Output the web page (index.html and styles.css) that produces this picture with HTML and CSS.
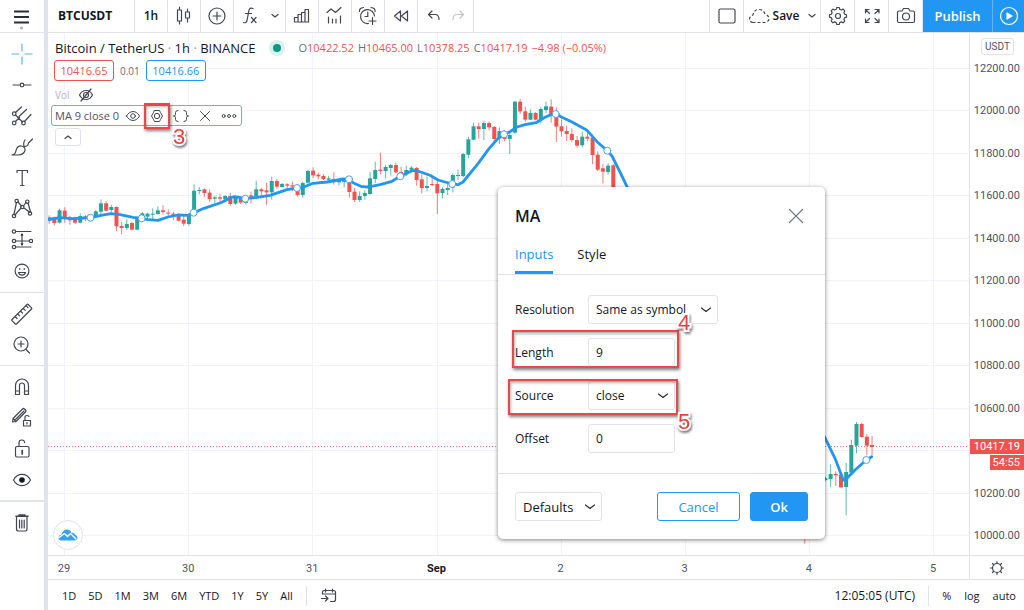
FILE: index.html
```html
<!DOCTYPE html>
<html lang="en">
<head>
<meta charset="utf-8">
<title>BTCUSDT chart</title>
<meta name="viewport" content="width=device-width, initial-scale=1">
<link rel="stylesheet" href="styles.css">
</head>
<body>
<div class="app">
  <aside class="sidebar" aria-label="Drawing tools">
    <button class="menu" aria-label="Menu"><svg width="18" height="22" viewBox="0 0 18 22"><path d="M1 2.500h15M1 8h15M1 13.500h15" stroke-width="2"/><circle cx="8.500" cy="19" r="1.600" class="dot"/></svg></button>
    <div class="tools">
      <button aria-label="Cross"><svg class="blue" width="22" height="22" viewBox="0 0 22 22"><path d="M11 1v7M11 14v7M1 11h7M14 11h7"/></svg></button>
      <button aria-label="Trend line"><svg width="22" height="22" viewBox="0 0 22 22"><path d="M2 11h7M13 11h7"/><circle cx="11" cy="11" r="1.800"/></svg></button>
      <button aria-label="Pitchfork"><svg width="22" height="22" viewBox="0 0 22 22"><path d="M4.500 7.500L10.500 2M4.500 10l7 7M8 11.500L15.500 4.500M4.500 16.500l4-4M13.500 16.500L20 9.500"/><circle cx="3.200" cy="8.700" r="1.800"/><circle cx="3.200" cy="18" r="1.800"/><circle cx="12.500" cy="18" r="1.800"/></svg></button>
      <button aria-label="Brush"><svg width="22" height="22" viewBox="0 0 22 22"><path d="M1 19q3.500-.5 4-4.500Q6.500 9.500 10.500 10q4 1 3.500 4.500Q12.500 19 7 19zM13 10q-1-3.500 1-6M13.500 10.500q3.500 0 4-3.500L21.500 3"/></svg></button>
      <button aria-label="Text"><svg width="22" height="22" viewBox="0 0 22 22"><path d="M6 5.500V3.500h10.500v2M11.200 3.500v15M9.500 18.500h3.500"/></svg></button>
      <button aria-label="Pattern"><svg width="22" height="22" viewBox="0 0 22 22"><path d="M5.500 4.500L3 16M7 4l3.500 4M12.500 8l2.500-3.500M4 17l6-7M13 10l6 4.500M17 5l2.500 9"/><circle cx="5.700" cy="3" r="1.700"/><circle cx="16.300" cy="3.700" r="1.700"/><circle cx="11.300" cy="9" r="1.700"/><circle cx="3" cy="18" r="1.700"/><circle cx="19" cy="15.500" r="1.700"/></svg></button>
      <button aria-label="Prediction"><svg width="22" height="22" viewBox="0 0 22 22"><path d="M5 2.500h15M5 12h13M5 18h15M11 5v11"/><path class="solid fine" d="M11 4.500l1.500 2h-3zM11 16.500l-1.500-2h3z"/><circle cx="3" cy="2.500" r="1.700"/><circle cx="3" cy="12" r="1.700"/><circle cx="3" cy="18" r="1.700"/><circle cx="20" cy="12" r="1.700"/></svg></button>
      <button aria-label="Icons"><svg width="22" height="22" viewBox="0 0 22 22"><circle cx="11" cy="11" r="6.900"/><path d="M7.500 12.500c1 3.500 6 3.500 7 0z"/><circle class="solid fine" cx="8.700" cy="9" r=".8"/><circle class="solid fine" cx="13.300" cy="9" r=".8"/></svg></button>
    </div>
    <div class="tools">
      <button aria-label="Measure"><svg width="22" height="22" viewBox="0 0 22 22"><path d="M1 16.500L16 1.500q.6-.6 1.200 0l3.300 3.300q.6.600 0 1.200L5.500 21q-.6.600-1.200 0L1 17.700q-.6-.6 0-1.200zM4 13.500l2 2M6.700 10.800l2 2M9.500 8l2 2M12.200 5.300l2 2M15 2.700l2 2"/></svg></button>
      <button aria-label="Zoom in"><svg width="22" height="22" viewBox="0 0 22 22"><circle cx="10" cy="10" r="7"/><path d="M10 7v6M7 10h6M15 15.500l3.500 3.500"/></svg></button>
    </div>
    <div class="tools">
      <button aria-label="Magnet"><svg width="22" height="22" viewBox="0 0 22 22"><path d="M4.500 18.500V9.500a6.500 6.500 0 0 1 13 0v9h-4V9.500a2.500 2.500 0 0 0-5 0v9zM4.500 15h4M13.500 15h4"/></svg></button>
      <button aria-label="Stay in drawing mode"><svg width="22" height="22" viewBox="0 0 22 22"><path d="M2 11.500L11.500 2q1-1 2 0l1 1q1 1 0 2L5 14.500l-3.500.5zM4 13l9-9M2 11.500l3 3M12.500 13.500h7v5.500h-7zM14 13.500v-3q0-2 2-2t2 1M16 15.500v1.500"/></svg></button>
      <button aria-label="Lock drawings"><svg width="22" height="22" viewBox="0 0 22 22"><path d="M8 8.500V5q0-3 2.800-3t2.700 2.500"/><rect x="4.500" y="8.500" width="13.500" height="10.500" rx="1.500"/><path d="M11.200 12.500v3.500" stroke-width="1.700"/></svg></button>
      <button aria-label="Hide drawings"><svg width="22" height="22" viewBox="0 0 22 22"><path d="M2.500 11c4-7.500 13-7.500 17 0-4 7.500-13 7.500-17 0z"/><circle class="solid" cx="11" cy="11" r="2.200"/></svg></button>
    </div>
    <div class="tools">
      <button aria-label="Remove"><svg width="22" height="22" viewBox="0 0 22 22"><path d="M5.500 4.500v12.500q0 2 2 2h7q1.500 0 1.500-2V4.500M8.500 8v8M10.800 8v8M13.200 8v8"/><path d="M5 4.300h12M8 3h6" stroke-width="1.600"/></svg></button>
    </div>
  </aside>

  <main class="main">
    <header class="topbar">
      <button class="symbol">BTCUSDT</button>
      <button class="cell interval">1h</button>
      <button class="cell" aria-label="Candles"><svg width="22" height="22" viewBox="0 0 22 22"><path d="M6.500 2v3M6.500 16v3M4.500 5h4v11h-4zM14.500 4v3M14.500 13v4M12.500 7h4v6h-4z"/></svg></button>
      <button class="cell" aria-label="Compare"><svg width="22" height="22" viewBox="0 0 22 22"><circle cx="11" cy="11" r="8"/><path d="M11 7v8M7 11h8"/></svg></button>
      <button class="cell wide" aria-label="Indicators"><svg width="22" height="22" viewBox="0 0 22 22"><path d="M13 3.500q-3.500-1.500-4.200 2.500L7 15.500q-.7 3-3.500 2M5.500 8.500h6M11.500 12.500l4.500 5M16 12.500l-4.500 5"/></svg><svg class="caret" width="8" height="6" viewBox="0 0 8 6"><path d="M1 1.500l3 2.500 3-2.500"/></svg></button>
      <button class="cell" aria-label="Financials"><svg width="22" height="22" viewBox="0 0 22 22"><path d="M3.500 12.500H7V17H3.500zM7 9.500h3.500V17H7zM13.500 7.500h-3V17H14V7.500zM14 4.500h3.500V17H14z"/></svg></button>
      <button class="cell" aria-label="Templates"><svg width="22" height="22" viewBox="0 0 22 22"><path d="M3 7.500l4-3.500 4.500 3.500 5.500-5M4.500 12v6M8.500 14v4M12 14v4M16.500 11v7"/></svg></button>
      <button class="cell" aria-label="Alert"><svg width="22" height="22" viewBox="0 0 22 22"><path d="M17.500 11a7 7 0 1 0-6 7.500M2.500 6.500q-.5-3.500 4-4M14 2.500q4.500.5 4 4M10.800 7v4.500H8M15.500 12.500v7M12 16h7"/></svg></button>
      <button class="cell" aria-label="Replay"><svg width="22" height="22" viewBox="0 0 22 22"><path d="M10.500 6v10l-6-5zM17.500 6v10l-6-5z"/></svg></button>
      <div class="cell history"><button aria-label="Undo"><svg width="18" height="22" viewBox="0 0 18 22"><path d="M7 6L3.500 9.500 7 13M3.500 9.500H10q4 0 4 5"/></svg></button><button class="faded" aria-label="Redo"><svg width="18" height="22" viewBox="0 0 18 22"><path d="M11 6l3.500 3.500L11 13M14.500 9.500H8q-4 0-4 5"/></svg></button></div>
      <div class="fill"></div>
      <div class="actions">
        <button class="cell" aria-label="Layout"><svg width="22" height="22" viewBox="0 0 22 22"><rect x="3" y="4" width="16" height="14" rx="1.500"/></svg></button>
        <button class="cell save"><svg class="dashed" width="22" height="22" viewBox="0 0 22 22"><path d="M5 17.500q-3.500-.5-3.500-3.500T5 10q1-5.500 6-5.500t6 5q4 1 4 4t-3.500 4z"/></svg><span>Save</span><svg class="caret" width="8" height="6" viewBox="0 0 8 6"><path d="M1 1.500l3 2.500 3-2.500"/></svg></button>
        <button class="cell" aria-label="Settings"><svg width="22" height="22" viewBox="0 0 22 22"><path d="M9.300 4.300L9.800 2.500h2.400l.5 1.800 1.700.7 1.700-.9 1.700 1.700-.9 1.700.7 1.700 1.900.6v2.400l-1.900.5-.7 1.700.9 1.700-1.700 1.700-1.700-.9-1.700.7-.5 1.900H9.800l-.5-1.900-1.700-.7-1.700.9-1.700-1.700.9-1.700-.7-1.700-1.900-.5V9.800l1.900-.6.7-1.700-.9-1.700 1.700-1.700 1.700.9z"/><circle cx="11" cy="11" r="2.500"/></svg></button>
        <button class="cell" aria-label="Fullscreen"><svg width="22" height="22" viewBox="0 0 22 22"><path d="M4.500 8V4.500H8M4.500 4.500l4 4M14 4.500h4V8M18 4.500l-4 4M4.500 14v3.500H8M4.500 17.500l4-4M14 17.500h4V14M18 17.500l-4-4"/></svg></button>
        <button class="cell" aria-label="Snapshot"><svg width="22" height="22" viewBox="0 0 22 22"><path d="M4 6h3l1.500-2.500h5L15 6h3q1.500 0 1.500 1.500v8.500q0 1.500-1.500 1.500H4q-1.500 0-1.500-1.500V7.500Q2.500 6 4 6z"/><circle cx="11" cy="11.500" r="3.500"/></svg></button>
      </div>
      <button class="publish">Publish</button>
      <button class="play" aria-label="Play"><svg width="22" height="22" viewBox="0 0 22 22"><circle cx="11" cy="11" r="8.500"/><path class="solid" d="M9 8l5 3-5 3z"/></svg></button>
    </header>

    <section class="chart">
      <div class="plot">
        <svg id="canvas" class="canvas" viewBox="48 33 921 522" preserveAspectRatio="xMinYMin slice" aria-label="Price chart"></svg>

        <div class="legend">
          <div class="title"><h1>Bitcoin / TetherUS <i>·</i> 1h <i>·</i> BINANCE</h1><span class="live"></span>
            <p class="ohlc"><span>O<b>10422.52</b></span><span>H<b>10465.00</b></span><span>L<b>10378.25</b></span><span>C<b>10417.19</b></span><b>−4.98 (−0.05%)</b></p></div>
          <div class="quotes"><button class="sell">10416.65</button><span>0.01</span><button class="buy">10416.66</button></div>
          <div class="volume"><span>Vol</span><svg width="16" height="14" viewBox="0 0 16 14"><path d="M1.500 7c3-6 10-6 13 0-3 6-10 6-13 0zM13 1L3 13"/><circle cx="8" cy="7" r="2.500"/></svg></div>
          <div class="study">
            <span class="name">MA 9 close 0</span>
            <button aria-label="Hide"><svg width="16" height="16" viewBox="0 0 16 16"><path d="M1.500 8c3-6 10-6 13 0-3 6-10 6-13 0z"/><circle cx="8" cy="8" r="2.300"/></svg></button>
            <button aria-label="Settings"><svg width="16" height="16" viewBox="0 0 16 16"><path d="M5.500 2.500h5l1 2 2 3.500-2 3.500-1 2h-5l-1-2-2-3.500 2-3.500z"/><circle cx="8" cy="8" r="2.700"/></svg><span class="mark mark-settings"></span><span class="step step-three">3</span></button>
            <button aria-label="Source code"><svg width="18" height="16" viewBox="0 0 18 16"><path d="M6 2.500q-2.500 0-2.500 2V6.500Q3.500 8 1.500 8q2 0 2 1.500v2q0 2 2.500 2M12 2.500q2.500 0 2.500 2V6.500q0 1.500 2 1.500-2 0-2 1.500v2q0 2-2.500 2"/></svg></button>
            <button aria-label="Remove"><svg width="16" height="16" viewBox="0 0 16 16"><path d="M3.500 3.500l9 9M12.500 3.500l-9 9"/></svg></button>
            <button aria-label="More"><svg width="16" height="16" viewBox="0 0 16 16"><circle cx="2.700" cy="8" r="1.500"/><circle cx="8" cy="8" r="1.500"/><circle cx="13.300" cy="8" r="1.500"/></svg></button>
          </div>
          <button class="collapse" aria-label="Collapse"><svg width="8" height="6" viewBox="0 0 8 6"><path d="M1 4.500L4 2l3 2.500"/></svg></button>
        </div>

        <a class="brand" href="#" aria-label="Chart provider"><svg width="20" height="14" viewBox="0 0 20 14"><path class="cloud" d="M3 12.500Q0 12 .5 9 1 6.500 3.500 6.500 5 1.500 9 1.500q3.500 0 4.500 3.500 2-1 3.500 1.500 2.500 1 2.500 3.500 0 2.500-3 2.500z"/><path class="trace" d="M1 9.500l5.500-4 3 3 3-3 5.500 5.500"/></svg></a>

        <form class="dialog" aria-label="MA settings">
          <div class="head"><h2>MA</h2><button type="button" aria-label="Close"><svg width="16" height="16" viewBox="0 0 16 16"><path d="M1.500 1.500l13 13M14.500 1.500l-13 13"/></svg></button></div>
          <div class="tabs"><button type="button" class="active">Inputs</button><button type="button">Style</button></div>
          <div class="fields">
            <div class="row"><label for="resolution">Resolution</label><div class="pick long"><select id="resolution"><option>Same as symbol</option></select><svg width="12" height="8" viewBox="0 0 12 8"><path d="M1.500 2L6 5.500 10.500 2"/></svg></div></div>
            <div class="row"><label for="length">Length</label><input id="length" type="text" value="9"><span class="mark mark-length"></span><span class="step step-four">4</span></div>
            <div class="row"><label for="source">Source</label><div class="pick"><select id="source"><option>close</option></select><svg width="12" height="8" viewBox="0 0 12 8"><path d="M1.500 2L6 5.500 10.500 2"/></svg></div><span class="mark mark-source"></span><span class="step step-five">5</span></div>
            <div class="row"><label for="offset">Offset</label><input id="offset" type="text" value="0"></div>
          </div>
          <div class="foot"><button type="button" class="defaults">Defaults<svg width="12" height="8" viewBox="0 0 12 8"><path d="M1.500 2L6 5.500 10.500 2"/></svg></button><div class="fill"></div><button type="button" class="cancel">Cancel</button><button type="button" class="ok">Ok</button></div>
        </form>
      </div>

      <div class="prices">
        <button class="currency">USDT</button>
        <span>12200.00</span><span>12000.00</span><span>11800.00</span><span>11600.00</span><span>11400.00</span><span>11200.00</span><span>11000.00</span><span>10800.00</span><span>10600.00</span><span class="covered">10400.00</span><span>10200.00</span><span>10000.00</span>
        <div class="last"><b>10417.19</b><b class="timer">54:55</b></div>
      </div>

      <div class="days"><span>29</span><span>30</span><span>31</span><span class="month">Sep</span><span>2</span><span>3</span><span>4</span><span>5</span></div>
      <button class="corner" aria-label="Scale settings"><svg width="16" height="16" viewBox="0 0 16 16"><circle cx="8" cy="8" r="4.500"/><path d="M8 1.500v2M8 12.500v2M1.500 8h2M12.500 8h2M3.500 3.500l1.300 1.300M11.200 11.200l1.300 1.300M12.500 3.500l-1.300 1.300M4.800 11.200l-1.300 1.300"/></svg></button>
    </section>

    <footer class="bottombar">
      <div class="ranges"><button>1D</button><button>5D</button><button>1M</button><button>3M</button><button>6M</button><button>YTD</button><button>1Y</button><button>5Y</button><button>All</button></div>
      <span class="rule"></span>
      <button aria-label="Go to date"><svg width="18" height="16" viewBox="0 0 18 16"><path d="M2.500 6V4.500q0-2 2-2h9q2 0 2 2v7q0 2-2 2h-3M2.500 6h13M5.500 1v3M12.500 1v3M1.500 10.500h6M5.500 8l2.500 2.500L5.500 13"/></svg></button>
      <div class="fill"></div>
      <button class="clock">12:05:05 (UTC)</button>
      <span class="rule"></span>
      <div class="scale"><button>%</button><button>log</button><button>auto</button></div>
    </footer>
  </main>
</div>
<script src="chart.js"></script>
</body>
</html>
```

FILE: styles.css
```css
* { box-sizing: border-box; }
body { margin: 0; background: #fff; color: #131722; font: 12px/16px "Open Sans", "Noto Sans", sans-serif; }
button { margin: 0; padding: 0; border: 0; background: none; color: inherit; font: inherit; cursor: pointer; }
h1, h2, p { margin: 0; font-weight: 400; }
svg { display: block; flex: none; fill: none; stroke: #434651; stroke-width: 1.2; stroke-linecap: round; stroke-linejoin: round; }
svg .solid { fill: currentColor; stroke: currentColor; }
svg .fine { stroke: none; }
svg.dashed { stroke-dasharray: 3 2; stroke-linecap: butt; }
.fill { flex: 1; }

.app { display: flex; min-height: 100vh; }
.sidebar { flex: none; width: 48px; border-right: 4px solid #e0e3eb; }
.sidebar button { display: flex; align-items: center; justify-content: center; width: 44px; height: 31px; }
.sidebar .menu { height: 33px; padding-top: 8px; border-bottom: 1px solid #e0e3eb; }
.menu svg { stroke: #2a2e39; stroke-linecap: butt; }
.menu svg .dot { fill: #b2b5be; stroke: none; }
.tools { padding: 5px 0; border-bottom: 1px solid #e0e3eb; }
.tools:nth-of-type(3) { border-bottom-width: 2px; }
.tools:first-of-type { padding-bottom: 6px; }
.tools:last-child { border-bottom: 0; }
.sidebar .blue { stroke: #5bb3f7; }

.main { flex: 1; min-width: 0; display: flex; flex-direction: column; }

.topbar { display: flex; flex: none; height: 33px; border-bottom: 1px solid #e0e3eb; overflow: hidden; }
.topbar > * { flex: none; }
.topbar > .fill { flex: 1; }
.topbar button, .cell { display: flex; align-items: center; justify-content: center; }
.topbar .symbol { justify-content: flex-start; width: 87px; padding: 0 10px; border-right: 1px solid #e0e3eb; font-weight: 700; }
.cell { width: 33px; border-right: 1px solid #e0e3eb; }
.interval { font-weight: 600; }
.wide { width: 52px; gap: 9px; }
.history { width: 56px; gap: 6px; }
.faded svg { stroke: #c1c4cd; }
.actions { display: flex; border-left: 1px solid #e0e3eb; }
.actions .cell { width: 34px; }
.actions .save { width: 77px; gap: 3px; font-weight: 600; }
.save .caret { margin-left: 6px; }
.publish { width: 69px; background: #2196f3; color: #fff; font-size: 13px; font-weight: 600; }
.play { width: 32px; background: #2196f3; border-left: 1px solid #64b5f6; color: #fff; }
.play svg { stroke: #fff; }

.chart { flex: 1; display: grid; grid-template-columns: 1fr 55px; grid-template-rows: 1fr 24px; min-height: 522px; }
.plot { position: relative; overflow: hidden; }
.canvas { position: absolute; inset: 0; width: 100%; height: 100%; stroke: none; }
.grid-line { stroke: #f0f3fa; stroke-width: 1; }
.last-line { stroke: #ef5350; stroke-width: 1; stroke-dasharray: 1 2; stroke-linecap: butt; opacity: .8; }
.up { fill: #26a69a; }
.down { fill: #ef5350; }
.wick { opacity: .75; }
.average { stroke: #2196f3; stroke-width: 2.8; }
.handle { fill: #fff; stroke: #4da3ea; stroke-width: 1; }

.legend { position: absolute; top: 5px; left: 3px; display: flex; flex-direction: column; align-items: flex-start; }
.title { display: flex; align-items: center; height: 20px; padding-left: 4px; }
.title h1 { font-size: 13px; line-height: 20px; white-space: nowrap; }
.title i { color: #9598a1; font-style: normal; }
.live { width: 8px; height: 8px; margin: 0 17px 0 18px; border-radius: 50%; background: #089981; box-shadow: 0 0 0 4px #d9f1ed; }
.ohlc { display: flex; gap: 4px; color: #6a6d78; font-size: 11px; white-space: nowrap; }
.ohlc b { color: #ef5350; font-weight: 400; }
.quotes { display: flex; align-items: center; gap: 6px; margin-top: 2px; padding-left: 3px; font-size: 11px; color: #6a6d78; }
.quotes span { font-size: 10px; }
.quotes button { width: 60px; height: 21px; border: 1px solid; border-radius: 3px; background: #fff; }
.quotes .sell { color: #ef5350; }
.quotes .buy { color: #2196f3; }
.volume { display: flex; align-items: center; gap: 8px; height: 16px; margin-top: 6px; padding-left: 4px; color: #b2b5be; font-size: 10px; }
.study { display: flex; align-items: center; width: 191px; height: 21px; margin-top: 2px; padding-left: 3px; border: 1px solid #5bb3f7; border-radius: 3px; background: #fff; color: #50535e; }
.study .name { flex: 1; font-size: 11px; white-space: nowrap; }
.study button { position: relative; display: flex; justify-content: center; width: 24px; }
.study svg { stroke-width: 1; }
.collapse { display: flex; align-items: center; justify-content: center; width: 26px; height: 18px; margin: 2px 0 0 4px; border: 1px solid #e0e3eb; border-radius: 3px; background: #fff; }

.mark { position: absolute; border: 2px solid #e9484b; box-shadow: 1px 2px 3px rgba(0, 0, 0, .5), inset 1px 2px 3px rgba(0, 0, 0, .3); pointer-events: none; }
.step { position: absolute; color: #f23b3f; font: 22px/22px "Liberation Sans", Arial, sans-serif; -webkit-text-stroke: 4px #fff; paint-order: stroke fill; filter: drop-shadow(1px 2px 1px rgba(0, 0, 0, .5)); pointer-events: none; }
.mark-settings { inset: -5px -1px; }
.step-three { top: 18px; left: 28px; z-index: 1; }
.mark-length { inset: -8px auto -1px -3px; width: 167px; }
.mark-source { inset: -2px auto -5px -7px; width: 170px; }
.step-four { top: -26px; left: 163px; }
.step-five { top: 30px; left: 163px; }

.brand { position: absolute; left: 5px; bottom: 5px; display: flex; align-items: center; justify-content: center; width: 30px; height: 30px; border: 1px solid #e0e3eb; border-radius: 50%; background: #fff; }
.brand .cloud { fill: #36a2ef; stroke: none; }
.brand .trace { stroke: #fff; stroke-width: 1.4; }

.dialog { position: absolute; left: 450px; top: 154px; width: 327px; border-radius: 5px; background: #fff; box-shadow: 0 1px 4px rgba(0, 0, 0, .5); color: #131722; }
.dialog svg { stroke: #2a2e39; }
.head { display: flex; align-items: center; justify-content: space-between; height: 50px; padding: 8px 21px 0 17px; }
.head h2 { font-size: 16px; line-height: 24px; font-weight: 600; }
.head svg { stroke: #787b86; }
.tabs { display: flex; gap: 24px; height: 38px; padding: 0 17px; border-bottom: 1px solid #e0e3eb; font-size: 13px; }
.tabs button { padding-bottom: 1px; border-bottom: 3px solid transparent; }
.tabs .active { border-color: #2196f3; color: #2196f3; font-weight: 500; }
.fields { display: grid; gap: 14px; padding: 20px 17px; }
.row { position: relative; display: flex; align-items: center; height: 29px; }
.row label { width: 73px; }
.row input, .row select { width: 100%; height: 29px; padding: 0 7px; border: 1px solid #e0e3eb; border-radius: 3px; background: #fff; color: inherit; font: inherit; appearance: none; }
.row input { width: 87px; }
.pick { position: relative; width: 87px; }
.pick.long { width: 130px; }
.pick svg { position: absolute; right: 6px; top: 11px; pointer-events: none; }
.foot { display: flex; align-items: center; gap: 10px; padding: 18px 17px; border-top: 1px solid #e0e3eb; font-size: 13px; }
.foot .fill { margin: 0 -10px; }
.foot button { height: 29px; border: 1px solid #2196f3; border-radius: 3px; }
.foot .defaults { display: flex; align-items: center; justify-content: space-between; width: 87px; padding: 0 5px 0 7px; border-color: #e0e3eb; }
.foot .cancel { width: 83px; color: #2196f3; font-weight: 500; }
.foot .ok { width: 58px; background: #2196f3; color: #fff; font-weight: 600; }

.prices { position: relative; display: flex; flex-direction: column; justify-content: space-between; align-items: flex-end; padding: 28px 4px 11px 0; border-left: 1px solid #e0e3eb; color: #50535e; font: 11px/16px Roboto, sans-serif; }
.prices .covered { visibility: hidden; }
.currency { position: absolute; top: 5px; right: 10px; width: 33px; height: 17px; border: 1px solid #e0e3eb; border-radius: 3px; font-size: 10px; line-height: 14px; }
.last { position: absolute; top: 406px; left: 0; right: 0; display: flex; flex-direction: column; align-items: flex-end; gap: 1px; color: #fff; }
.last b { width: 100%; height: 15px; padding-right: 4px; background: #ef5350; font-weight: 400; line-height: 15px; text-align: right; }
.last .timer { width: 34px; }
.days { display: flex; justify-content: space-between; align-items: center; padding: 3px 21px 0 1px; border-top: 1px solid #e0e3eb; color: #50535e; font: 11px/16px Roboto, sans-serif; }
.days span { width: 30px; text-align: center; }
.days .month { color: #131722; font-weight: 700; }
.corner { display: flex; align-items: center; justify-content: center; border: solid #e0e3eb; border-width: 1px 0 0 1px; }

.bottombar { display: flex; flex: none; align-items: center; height: 31px; padding: 2px 8px 0 14px; border-top: 1px solid #e0e3eb; font-size: 11px; white-space: nowrap; }
.ranges { display: flex; gap: 12px; }
.rule { width: 1px; height: 20px; margin: 0 13px; background: #e0e3eb; }
.clock { font-size: 12px; }
.scale { display: flex; gap: 13px; }
```

FILE: chart.js
```js
(function () {
  const NS = 'http://www.w3.org/2000/svg';
  const canvas = document.getElementById('canvas');
  const FIRST_X = 49.2;
  const STEP = 5.175;

  function add(name, attrs) {
    const el = document.createElementNS(NS, name);
    for (const key in attrs) el.setAttribute(key, attrs[key]);
    canvas.appendChild(el);
  }

  for (let i = 0; i < 12; i++) {
    const y = Math.round(68 + i * 42.45) + 0.5;
    add('path', { class: 'grid-line', d: 'M48 ' + y + 'H969' });
  }
  for (let i = 0; i < 8; i++) {
    const x = Math.round(64 + i * 124.2) + 0.5;
    add('path', { class: 'grid-line', d: 'M' + x + ' 33V556' });
  }

  // Each bar: direction, high, open/close top, open/close bottom, low,
  // in thirds of a unit below the block's base line.
  const blocks = [
    { start: 0, base: 150, bars: 'd196,202,212,222 d200,204,219,226 u176,181,218,220 d172,182,204,218 d198,208,210,224 d200,207,218,222 u190,198,218,220 d195,199,203,213 d192,197,208,214 u180,184,202,205 u148,160,185,193 d154,160,182,184 u164,171,180,188 d169,171,229,243 d216,228,234,253 u208,222,234,240 d216,219,239,241 u200,206,239,240 u186,190,206,208 u188,191,200,212 u175,191,193,208 u169,181,192,194 d166,181,186,194 d178,188,191,200 d186,191,197,210 d190,196,212,214 d198,209,221,228 u190,196,222,227' },
    { start: 28, base: 130, bars: 'u163,182,240,242 u171,180,183,193 d175,178,189,201 d178,188,207,216 u197,202,206,219 d192,202,206,215 u195,198,208,212 d188,198,222,227 u198,203,221,224 d200,206,218,222 u195,200,219,224 d185,196,200,220 u152,178,200,207 d173,178,184,205 d158,181,187,224 u140,153,187,209 d147,153,170,176 u159,162,171,172 d160,163,167,179 d155,166,170,184 d162,168,195,200 u155,159,195,203 u119,123,158,160 d112,122,136,145 d128,134,139,147 d132,138,147,150 u138,145,149,152 d127,147,157,164 u148,153,157,166 u146,149,156,172 d145,150,186,203 d174,185,210,216 u184,198,210,216 u181,189,198,209 u126,145,192,194 u95,120,147,159 d68,119,123,133 u106,111,123,145 u102,105,114,137 d98,105,127,129 d110,126,134,138 u107,120,133,138 u108,113,119,122 d111,114,150,167 d133,148,174,190 u140,168,174,184 d142,162,165,168' },
    { start: 75, base: 80, bars: 'd300,312,340,402 u322,327,339,355 u312,324,330,345 u280,285,323,337 u269,285,287,300 u219,222,288,291 u170,178,224,234 u128,139,179,180 d128,139,147,176 u122,129,147,180 d125,129,142,151 d138,141,177,188 u142,153,175,192 d150,162,177,184 u155,165,177,222 u62,65,158,161 d57,65,94,102 d80,94,119,125 u88,99,119,120 d96,99,119,121 u80,87,120,130 u65,79,90,99 d58,80,105,128 d82,100,140,186 d118,139,154,170 d137,153,162,183 d145,162,180,186 d168,180,197,203 u155,170,196,202 d152,170,176,184 d164,173,225,252 d214,224,269,273 d252,265,275,310 u250,257,276,284 d252,256,330,340' },
    { start: 146, base: 400, bars: 'd330,340,370,431' },
    { start: 150, base: 400, bars: 'u230,235,240,244 u193,222,237,262 d214,222,226,258 d222,224,262,263 u189,216,261,346 u119,135,218,220 u66,72,137,160 d68,72,111,113 d102,110,137,166 d108,135,141,165' }
  ];

  blocks.forEach(function (block) {
    block.bars.split(' ').forEach(function (bar, i) {
      const tone = bar[0] === 'u' ? 'up' : 'down';
      const v = bar.slice(1).split(',').map(n => block.base + n / 3);
      const x = FIRST_X + (block.start + i) * STEP;
      add('rect', { class: 'wick ' + tone, x: x - 0.5, y: v[0], width: 1, height: v[3] - v[0] });
      add('rect', { class: tone, x: x - 2, y: v[1], width: 4, height: Math.max(1, v[2] - v[1]) });
    });
  });

  add('path', { class: 'last-line', d: 'M48 446.5H969' });

  const averages = [
    '48,219.5 60,217.7 73,218.7 90.5,217.7 101,215.3 111,213.7 120,214.7 133,217.3 141.7,218.3 148,219.7 158,220.3 168,217 178,215 188.5,215.3 193.7,212.7 204,208.3 220,203 225,200.7 230,197.7 235,196.7 245.3,198.7 257,197.3 270,195.3 287,189.7 297,188 303,187.3 313,183.3 327,182 343,179 349,179.3 354,183.3 362,186.7 368,187 380,184.7 392,181.3 400.3,176.3 412,170.7 417,170.7 430,175.3 438,180 452.3,184 458,184.7 463,182 478,163.7 489,148.7 498,138.3 504,134.3 510,131.7 517,127 525,124.7 536,122.7 545,117.3 552,114.3 555.7,114 562,117.3 572,122 587,130.3 597,141.7 607.3,150.7 612,156 620,172 627,186.7 632,200',
    '820,428 825.3,438.3 835,458.3 843.3,480 845,480.3 855,470 866.3,460 871.7,456.7'
  ];
  averages.forEach(points => add('polyline', { class: 'average', points: points }));

  [[90.5, 217.7], [141.7, 218.3], [193.7, 212.7], [245.3, 198.7], [297, 188], [349, 179.3], [400.3, 176.3], [452.3, 184], [504, 134.3], [555.7, 114], [607.3, 150.7], [866.3, 460]]
    .forEach(p => add('circle', { class: 'handle', cx: p[0], cy: p[1], r: 3.5 }));
})();
```
